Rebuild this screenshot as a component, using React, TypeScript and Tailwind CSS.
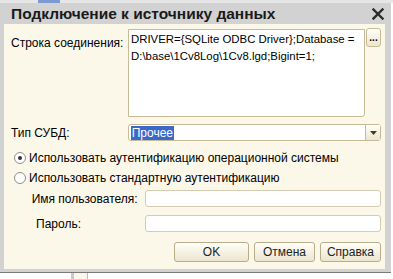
import React from "react";

function Radio({ checked }: { checked?: boolean }) {
  return (
    <span className="w-[12px] h-[12px] rounded-full border border-[#8e8e8e] bg-white flex items-center justify-center shrink-0">
      {checked && <span className="w-[4px] h-[4px] rounded-full bg-[#333]" />}
    </span>
  );
}

function Btn({ label, w }: { label: string; w: string }) {
  return (
    <button
      className={`${w} h-[20px] rounded-[3px] border border-[#b8ad88] bg-gradient-to-b from-[#fffef8] to-[#ece6cf] text-[12px] leading-none text-[#222] flex items-center justify-center`}
    >
      {label}
    </button>
  );
}

export default function App() {
  return (
    <div className="w-[393px] h-[279px] bg-white overflow-hidden flex flex-col font-['Liberation_Sans',Arial,sans-serif] text-[12px] text-black">
      {/* strip of window behind */}
      <div className="h-[3px] flex bg-[#e6e6e6]">
        <div className="w-[38px]" />
        <div className="w-[22px] bg-[#7d9bd0]" />
      </div>

      <div className="w-[391px] flex flex-col bg-[#d2d2d2] pl-[4px] pr-[6px] pb-[3px] border-b border-[#7a7a7a]">
        {/* title bar */}
        <div className="h-[21px] flex items-center justify-between pl-[7px] pr-[1px]">
          <span className="font-bold text-[15.5px] text-[#1a1a1a] leading-none">Подключение к источнику данных</span>
          <svg width="12" height="12" viewBox="0 0 12 12">
            <path d="M1.5 1.5 L10.5 10.5 M10.5 1.5 L1.5 10.5" stroke="#2b2b2b" strokeWidth="2.4" strokeLinecap="square" />
          </svg>
        </div>

        {/* body */}
        <div className="h-[245px] bg-[#fbf8ea] pl-[7px] pr-[4px] pt-[5px] flex flex-col">
          <div className="flex">
            <div className="w-[117px] pt-[6px] leading-[16px]">Строка соединения:</div>
            <div className="w-[237px] h-[88px] bg-white border border-[#c6bb96] rounded-br-[3px] px-[2px] pt-[1px] leading-[17px] text-[11.4px] flex flex-col">
              <span className="whitespace-nowrap">DRIVER={"{SQLite ODBC Driver}"};Database =</span>
              <span className="whitespace-nowrap">D:\base\1Cv8Log\1Cv8.lgd;Bigint=1;</span>
            </div>
            <div className="ml-[1px] -mt-[1px] w-[15px] h-[19px] rounded-[3px] border border-[#c6bb96] bg-gradient-to-b from-[#fffef8] to-[#ece6cf] flex items-end justify-center pb-[3px] text-[10px] leading-none font-bold">
              ...
            </div>
          </div>

          <div className="flex mt-[7px] items-center">
            <div className="w-[117px] leading-[16px]">Тип СУБД:</div>
            <div className="w-[254px] h-[17px] bg-white border border-[#c6bb96] rounded-[3px] flex items-center">
              <span className="ml-[2px] bg-[#3c68c9] text-white leading-[14px] px-[1px]">Прочее</span>
              <div className="ml-auto w-[15px] h-[15px] border-l border-[#c6bb96] bg-gradient-to-b from-[#fffef8] to-[#ece6cf] flex items-center justify-center">
                <svg width="7" height="4" viewBox="0 0 7 4">
                  <path d="M0 0 H7 L3.5 4 Z" fill="#4a3c12" />
                </svg>
              </div>
            </div>
          </div>

          <div className="flex items-center gap-[3px] mt-[9px] ml-[3px] leading-[16px]">
            <Radio checked />
            <span>Использовать аутентификацию операционной системы</span>
          </div>
          <div className="flex items-center gap-[3px] mt-[4px] ml-[3px] leading-[16px]">
            <Radio />
            <span>Использовать стандартную аутентификацию</span>
          </div>

          <div className="flex items-center mt-[4px]">
            <div className="w-[134px] text-right pr-[7px] leading-[16px]">Имя пользователя:</div>
            <div className="w-[237px] h-[17px] bg-white border border-[#d3ccb0] rounded-[3px]" />
          </div>
          <div className="flex items-center mt-[8px]">
            <div className="w-[134px] pl-[25px] leading-[16px]">Пароль:</div>
            <div className="w-[237px] h-[17px] bg-white border border-[#d3ccb0] rounded-[3px]" />
          </div>

          <div className="flex justify-end gap-[5px] mt-[10px]">
            <Btn label="OK" w="w-[75px]" />
            <Btn label="Отмена" w="w-[61px]" />
            <Btn label="Справка" w="w-[61px]" />
          </div>
        </div>
      </div>

      {/* window behind, below dialog */}
      <div className="flex flex-1">
        <div className="w-[71px]" />
        <div className="w-[3px] bg-[#c8c8c8]" />
        <div className="w-[14px] bg-[#fbf8ea] border-r border-[#c6bb96]" />
      </div>
    </div>
  );
}
